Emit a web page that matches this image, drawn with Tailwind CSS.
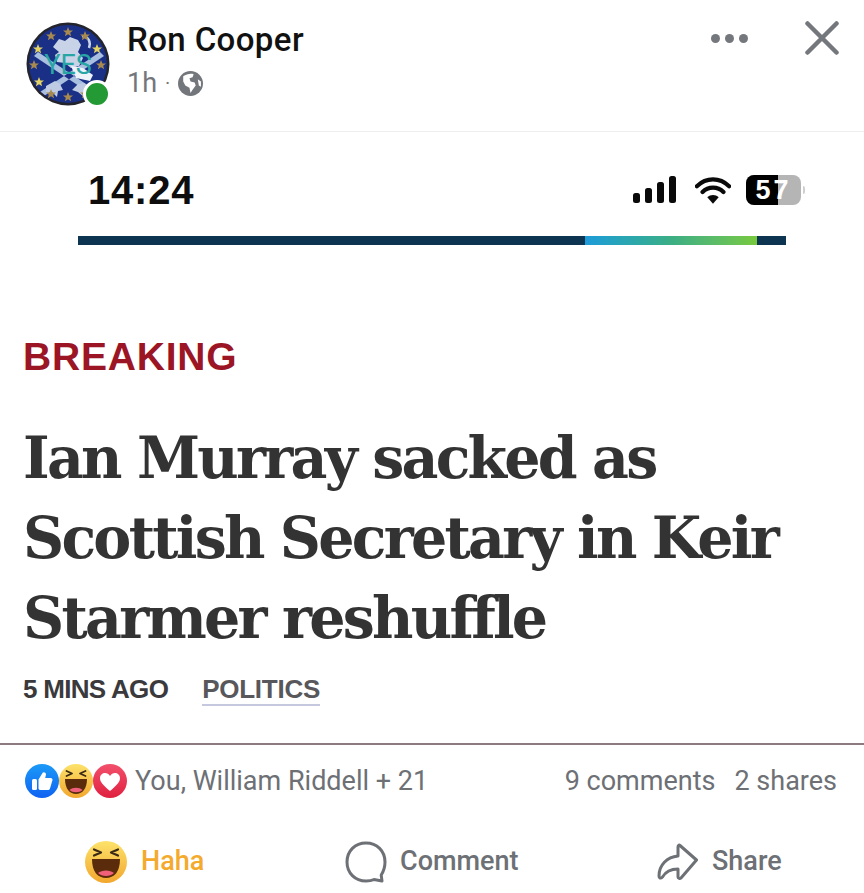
<!DOCTYPE html>
<html>
<head>
<meta charset="utf-8">
<script src="https://cdn.jsdelivr.net/npm/@tailwindcss/browser@4"></script>
</head>
<body class="bg-white">
<div class="w-[864px] h-[893px] overflow-hidden flex flex-col bg-white font-['Roboto',sans-serif]">
  <header class="h-[132px] shrink-0 border-b border-[#eeeeee] flex items-start pl-[26px] pr-[25px]">
    <div class="relative w-[84px] h-[84px] mt-[22px] shrink-0">
      <svg viewBox="0 0 84 84" class="w-[84px] h-[84px]">
        <defs>
          <clipPath id="c"><circle cx="42" cy="42" r="39"/></clipPath>
          <path id="s" d="M0-5 1.400-1.600 5-1.500 2.200.7 3.100 4.200 0 2.200-3.100 4.200-2.200.7-5-1.500-1.400-1.600Z"/>
        </defs>
        <circle cx="42" cy="42" r="41.500" fill="#24242c"/>
        <g clip-path="url(#c)">
          <rect width="84" height="84" fill="#1a2f86"/>
          <path d="M12 30 78 74 74 78 8 34ZM74 30 8 74 12 78 78 34Z" fill="#a9bfe0"/>
          <path d="M27 25l6-8 6 2 5-4 8 3 3 5-3 7 5 6-4 8-8 2-6-5-8-1-2-7 4-3Z" fill="#c8d3e8"/>
          <path d="M56 14c7 1 9 6 7 12" fill="none" stroke="#c8d3e8" stroke-width="2.500"/>
          <path d="M20 64l9-5 5 3 3 6-5 1-1 6-5-5-6 1ZM46 68l6-6 6-1 6 5-5 3-1 6-6-5Z" fill="#bfcbe3"/>
          <path d="M45 44l12 2 10 7-3 6-14-3Z" fill="#eef3fa"/>
        </g>
        <g fill="#a98a4e">
          <use href="#s" x="25" y="14"/><use href="#s" x="42" y="10"/><use href="#s" x="59" y="14"/>
          <use href="#s" x="12" y="27" fill="#e4d262"/><use href="#s" x="71" y="27" fill="#e4d262"/>
          <use href="#s" x="8" y="43"/><use href="#s" x="75" y="43"/>
          <use href="#s" x="13" y="60" fill="#e4d262"/><use href="#s" x="25" y="72"/><use href="#s" x="42" y="75"/><use href="#s" x="59" y="72"/>
        </g>
        <text x="42" y="52" text-anchor="middle" font-family="Roboto" font-size="27" fill="#28a6a6">YES</text>
      </svg>
      <span class="absolute left-[57px] top-[58px] w-[28px] h-[28px] rounded-full bg-[#249a35] border-[3px] border-white"></span>
    </div>
    <div class="ml-[17px] pt-[21px] flex-1">
      <div class="text-[33px] leading-[38px] font-medium text-[#111111] tracking-[0.4px]">Ron Cooper</div>
      <div class="flex items-center mt-[10px] h-[28px] text-[27px] leading-[28px] text-[#73767b]">
        <span>1h</span><span class="ml-[8px] mr-[8px] text-[20px]">·</span>
        <svg viewBox="0 0 24 24" class="w-[25px] h-[25px]"><circle cx="12" cy="12" r="12" fill="#73767b"/><path d="M5 5c3-2 7-3 10-2l-1 3-3 1 1 3 4 1 1 3-3 4-2 3-1-5-4-2-2-4Z" fill="#fff"/><path d="M19 8l3 2v5l-2-1Z" fill="#fff"/></svg>
      </div>
    </div>
    <div class="flex items-center gap-[5px] mt-[34px] mr-[57px]">
      <span class="w-[9px] h-[9px] rounded-full bg-[#74777c]"></span>
      <span class="w-[9px] h-[9px] rounded-full bg-[#74777c]"></span>
      <span class="w-[9px] h-[9px] rounded-full bg-[#74777c]"></span>
    </div>
    <svg viewBox="0 0 34 34" class="w-[34px] h-[34px] mt-[21px]"><path d="M2.500 2.500 31.500 31.500M31.500 2.500 2.500 31.500" stroke="#74777c" stroke-width="4.500" stroke-linecap="round"/></svg>
  </header>

  <main class="h-[613px] shrink-0 border-b-[2px] border-[#8c7a80] flex flex-col">
    <div class="flex items-center justify-between pl-[88px] pr-[59px] pt-[38px] h-[78px]">
      <span class="font-['Liberation_Sans',sans-serif] font-bold text-[40px] leading-[40px] tracking-[0.8px] text-[#0d0d0d]">14:24</span>
      <div class="flex items-center">
        <svg viewBox="0 0 44 28" class="w-[44px] h-[28px]"><g fill="#0a0a0a"><rect x="0" y="17" width="7" height="10" rx="2.500"/><rect x="12" y="12" width="7" height="15" rx="2.500"/><rect x="24" y="6" width="7" height="21" rx="2.500"/><rect x="36" y="0" width="7" height="27" rx="2.500"/></g></svg>
        <svg viewBox="0 0 38 28" class="w-[36px] h-[27px] ml-[18px]"><path d="M2 9.500C12 0 26 0 36 9.500M8 15.500C14 9.500 24 9.500 30 15.500" fill="none" stroke="#0a0a0a" stroke-width="4.500" stroke-linecap="round"/><path d="M19 28l-6-7c3.500-3 8.500-3 12 0Z" fill="#0a0a0a"/></svg>
        <div class="relative ml-[15px] w-[55px] h-[30px] rounded-[8px] overflow-hidden bg-[#b5b5b5] flex">
          <div class="w-[32px] h-full bg-black"></div>
          <span class="absolute inset-0 text-center font-['Liberation_Sans',sans-serif] font-bold text-[27px] leading-[30px] text-white tracking-[3px]">57</span>
        </div>
        <div class="w-[2px] h-[8px] ml-[2px] bg-[#cfcfcf] rounded-r"></div>
      </div>
    </div>
    <div class="mt-[26px] ml-[78px] w-[708px] h-[9px] flex">
      <div class="w-[507px] bg-[#0d3451]"></div>
      <div class="w-[172px] bg-gradient-to-r from-[#1f9bd8] via-[#3bae84] to-[#77c93a]"></div>
      <div class="w-[29px] bg-[#0d3451]"></div>
    </div>
    <div class="pl-[23px] mt-[90px]">
      <div class="font-['Liberation_Sans',sans-serif] font-bold text-[39px] leading-[44px] text-[#9c1525] tracking-[0.8px]">BREAKING</div>
      <h1 class="mt-[39px] font-['DejaVu_Serif',serif] font-bold text-[57px] leading-[80px] text-[#333333] tracking-[-2.750px] whitespace-nowrap">Ian Murray sacked as<br>Scottish Secretary in Keir<br>Starmer reshuffle</h1>
      <div class="flex items-start mt-[15px] font-['Liberation_Sans',sans-serif] font-bold text-[26px] leading-[32px]">
        <span class="text-[#3a3a3c] tracking-[-0.7px]">5 MINS AGO</span>
        <span class="ml-[34px] text-[#58585c] border-b-[2px] border-[#c5c8df] h-[33px] tracking-[-0.25px]">POLITICS</span>
      </div>
    </div>
  </main>

  <section class="h-[72px] shrink-0 flex items-center pl-[25px] pr-[27px] text-[27px] text-[#6d7075]">
    <div class="flex items-center">
      <svg viewBox="0 0 34 34" class="w-[34px] h-[34px] relative"><defs><linearGradient id="b" x1="0" y1="0" x2="0" y2="1"><stop offset="0" stop-color="#1b9af7"/><stop offset="1" stop-color="#0f62f2"/></linearGradient></defs><circle cx="17" cy="17" r="17" fill="url(#b)"/><rect x="7" y="15" width="5" height="11" rx="1.500" fill="#fff"/><path d="M13.500 15.500 17.500 9c.5-1.500 3.500-1 3.500 1.500l-.8 3.500h5.300c2 0 2.500 2 1.700 3l-2.200 7.500c-.5 1-1 1.500-2.500 1.500h-7c-1 0-1.500-.5-2-1Z" fill="#fff"/></svg>
      <svg viewBox="0 0 34 34" class="w-[34px] h-[34px]"><defs><linearGradient id="h" x1="0" y1="0" x2="0" y2="1"><stop offset="0" stop-color="#fde26a"/><stop offset="1" stop-color="#f2a72e"/></linearGradient></defs><circle cx="17" cy="17" r="17" fill="url(#h)"/><path d="M6 15h22c0 10-5 15-11 15S6 25 6 15Z" fill="#5a2c0c"/><path d="M10.500 26c3-3 10-3 13 0-3 3-10 3-13 0Z" fill="#f0607a"/><path d="M7.500 7l5.500 2.500L7.500 12M26.500 7 21 9.500 26.500 12" fill="none" stroke="#3a2a17" stroke-width="1.800" stroke-linecap="round" stroke-linejoin="round"/></svg>
      <svg viewBox="0 0 34 34" class="w-[34px] h-[34px]"><defs><linearGradient id="r" x1="0" y1="0" x2="0" y2="1"><stop offset="0" stop-color="#f2506c"/><stop offset="1" stop-color="#e0203f"/></linearGradient></defs><circle cx="17" cy="17" r="17" fill="url(#r)"/><path d="M17 27C10 21 7 18 7 14c0-3 2.500-5 5-5 2 0 4 1 5 3 1-2 3-3 5-3 2.500 0 5 2 5 5 0 4-3 7-10 13Z" fill="#fff"/></svg>
      <span class="ml-[8px]">You, William Riddell + 21</span>
    </div>
    <span class="ml-auto">9 comments</span>
    <span class="ml-[19px]">2 shares</span>
  </section>

  <nav class="h-[76px] pt-[13px] shrink-0 flex items-center text-[27px] font-medium text-[#6d7075] relative">
    <div class="w-[293px] flex items-center pl-[85px]">
      <svg viewBox="0 0 42 42" class="w-[42px] h-[42px]"><defs><linearGradient id="h2" x1="0" y1="0" x2="0" y2="1"><stop offset="0" stop-color="#fde26a"/><stop offset="1" stop-color="#f2a72e"/></linearGradient></defs><circle cx="21" cy="21" r="21" fill="url(#h2)"/><path d="M7 18h28c0 13-6 19-14 19S7 31 7 18Z" fill="#5a2c0c"/><path d="M13 32c4-3.500 12-3.500 16 0-4 4-12 4-16 0Z" fill="#f0607a"/><path d="M9 8.500l7 3-7 3M33 8.500l-7 3 7 3" fill="none" stroke="#3a2a17" stroke-width="2.200" stroke-linecap="round" stroke-linejoin="round"/></svg>
      <span class="ml-[14px] text-[#f4aa2c]">Haha</span>
    </div>
    <div class="w-[284px] flex items-center pl-[52px]">
      <svg viewBox="0 0 42 42" class="w-[42px] h-[42px]"><path d="M21 2C10 2 2 10 2 21s8 19 19 19c3 0 6-.5 8-1.500l8 1.500-.8-6C38.500 30.500 40 26 40 21 40 10 32 2 21 2Z" fill="none" stroke="#6d7075" stroke-width="3" stroke-linejoin="round"/></svg>
      <span class="ml-[13px]">Comment</span>
    </div>
    <div class="flex items-center pl-[80px]">
      <svg viewBox="0 0 42 38" class="w-[42px] h-[38px]"><path d="M23 2.500 39.500 17 24 35c-1 1-3 .5-3-1v-8c-7 0-12 2-15.500 8-2 2-3.500 1-3.500-1 0-11 8-19 19-20V4c0-1.500 1-2.500 2-1.500Z" fill="none" stroke="#6d7075" stroke-width="3" stroke-linejoin="round"/></svg>
      <span class="ml-[13px]">Share</span>
    </div>
  </nav>
</div>
</body>
</html>
